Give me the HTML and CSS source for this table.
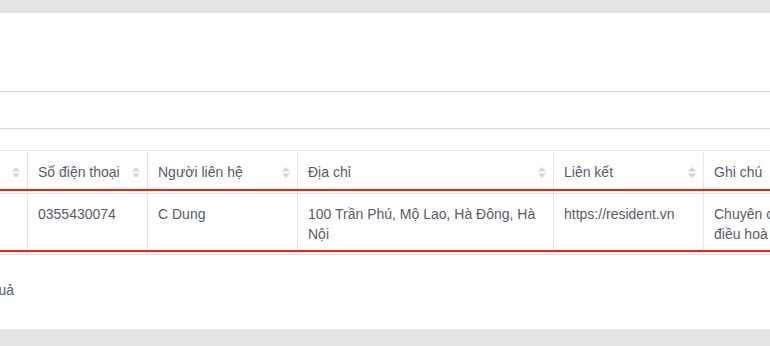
FILE: index.html
```html
<!DOCTYPE html>
<html lang="vi">
<head>
<meta charset="utf-8">
<title>Nhà cung cấp</title>
<link rel="stylesheet" href="styles.css">
</head>
<body>
<div class="page">
  <div class="card">
    <div class="card-head"></div>
    <div class="toolbar"></div>
    <div class="table">
      <div class="row head-row">
        <div class="cell"><span>Tên nhà cung cấp</span><svg class="sort" viewBox="0 0 8 11" width="8" height="11"><polygon points="0,4.5 4,0 8,4.5"/><polygon points="0,6.5 4,11 8,6.5"/></svg></div>
        <div class="cell"><span>Số điện thoại</span><svg class="sort" viewBox="0 0 8 11" width="8" height="11"><polygon points="0,4.5 4,0 8,4.5"/><polygon points="0,6.5 4,11 8,6.5"/></svg></div>
        <div class="cell"><span>Người liên hệ</span><svg class="sort" viewBox="0 0 8 11" width="8" height="11"><polygon points="0,4.5 4,0 8,4.5"/><polygon points="0,6.5 4,11 8,6.5"/></svg></div>
        <div class="cell"><span>Địa chỉ</span><svg class="sort" viewBox="0 0 8 11" width="8" height="11"><polygon points="0,4.5 4,0 8,4.5"/><polygon points="0,6.5 4,11 8,6.5"/></svg></div>
        <div class="cell"><span>Liên kết</span><svg class="sort" viewBox="0 0 8 11" width="8" height="11"><polygon points="0,4.5 4,0 8,4.5"/><polygon points="0,6.5 4,11 8,6.5"/></svg></div>
        <div class="cell"><span>Ghi chú</span><svg class="sort" viewBox="0 0 8 11" width="8" height="11"><polygon points="0,4.5 4,0 8,4.5"/><polygon points="0,6.5 4,11 8,6.5"/></svg></div>
      </div>
      <div class="row body-row">
        <div class="cell">Điều hoà Resident</div>
        <div class="cell">0355430074</div>
        <div class="cell">C Dung</div>
        <div class="cell">100 Trần Phú, Mộ Lao, Hà Đông, Hà Nội</div>
        <div class="cell">https://resident.vn</div>
        <div class="cell">Chuyên cung cấp lắp đặt điều hoà không khí</div>
      </div>
    </div>
    <div class="footer"><span class="total">Hiển thị 1 kết quả</span></div>
  </div>
</div>
</body>
</html>
```

FILE: styles.css
```css
html, body {
  margin: 0;
  overflow: hidden;
  background: #e4e4e4;
}
body {
  font-family: "Liberation Sans", Arial, Helvetica, sans-serif;
  font-size: 14px;
  color: #595b69;
}
.page {
  padding-top: 13px;
}
.card {
  margin-left: -200px;
  width: 1300px;
  background: #fff;
  box-shadow: 0 1px 5px rgba(0, 0, 0, 0.07);
}
.card-head {
  height: 78px;
  border-bottom: 1px solid #d9d9e0;
}
.toolbar {
  height: 36px;
  border-bottom: 1px solid #d9d9e0;
  margin-bottom: 21px;
}
.table {
  border-top: 1px solid #e6e6ec;
}
.row {
  display: grid;
  grid-template-columns: 228px 120px 150px 256px 150px 190px;
  position: relative;
  border-bottom: 1px solid #e6e6ec;
}
.row::after {
  content: "";
  position: absolute;
  left: 0;
  right: 0;
  bottom: 2px;
  height: 2px;
  background: #f81e0a;
}
.cell {
  border-right: 1px solid #e6e6ec;
  padding: 10px;
  line-height: 20px;
}
.head-row .cell {
  padding: 11px 7px 11px 10px;
  display: flex;
  justify-content: space-between;
  align-items: center;
}
.sort {
  fill: #d3d4dc;
  flex: none;
}
.footer {
  padding: 25px 0 29px;
  line-height: 20px;
}
.total {
  display: inline-block;
  width: 214px;
  text-align: right;
}
```
